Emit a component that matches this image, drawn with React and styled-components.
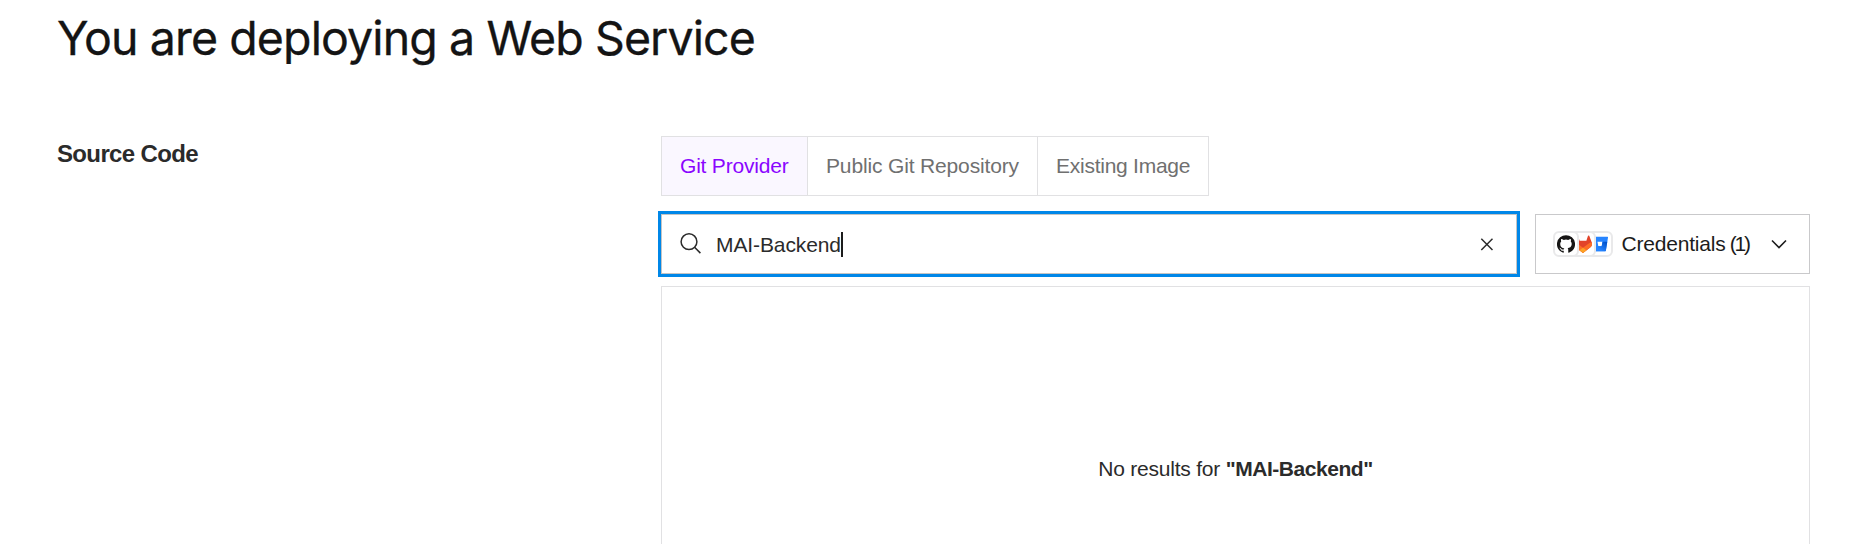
import React from "react";
import styled, { createGlobalStyle } from "styled-components";

const GlobalStyle = createGlobalStyle`
  *, *::before, *::after { box-sizing: border-box; }
  body {
    margin: 0;
    background: #fff;
    color: #2b2b2b;
    font-family: "Liberation Sans", sans-serif;
    font-size: 21px;
    overflow: hidden;
  }
  h1, h2, p { margin: 0; }
  button, input { font: inherit; color: inherit; }
`;

const Page = styled.main`
  height: 544px;
  padding: 10px 54px 0 57px;
  display: flex;
  flex-direction: column;
  overflow: hidden;
`;

const Title = styled.h1`
  height: 60px;
  line-height: 57px;
  font-family: Inter, sans-serif;
  font-size: 46.5px;
  font-weight: 400;
  letter-spacing: -0.9px;
  -webkit-text-stroke: 0.3px #141414;
  color: #141414;
  white-space: nowrap;
`;

const Section = styled.section`
  display: grid;
  grid-template-columns: 604px 1fr;
  margin-top: 66px;
  flex: 1;
`;

const SectionTitle = styled.h2`
  padding-top: 4px;
  line-height: 28px;
  font-size: 24px;
  font-weight: 700;
  letter-spacing: -0.65px;
`;

const Content = styled.div`
  display: flex;
  flex-direction: column;
  min-width: 0;
`;

const Tabs = styled.div`
  display: flex;
  width: 548px;
  height: 60px;
  border: 1px solid #e1e1e3;
`;

const Tab = styled.button`
  width: ${(p) => p.$width}px;
  padding: 0 0 0 18px;
  text-align: left;
  white-space: nowrap;
  border: 0;
  letter-spacing: ${(p) => p.$tracking}px;
  background: ${(p) => (p.$active ? "#faf7ff" : "#fff")};
  color: ${(p) => (p.$active ? "#8a05ff" : "#707070")};
  & + & { border-left: 1px solid #e1e1e3; }
`;

const Controls = styled.div`
  display: flex;
  gap: 18px;
  margin: 18px 0 12px;
`;

const SearchField = styled.div`
  flex: 1;
  height: 60px;
  display: flex;
  align-items: center;
  padding: 0 23px 0 18px;
  border: 1px solid #c4c4c4;
  box-shadow: 0 0 0 3px #0087e8;
`;

const Query = styled.span`
  margin-left: 14px;
  padding-top: 1px;
  flex: 1;
  display: flex;
  align-items: center;
  white-space: nowrap;
  letter-spacing: -0.1px;
`;

const Caret = styled.span`
  width: 2px;
  height: 25px;
  background: #1c1c1c;
`;

const CredentialsButton = styled.button`
  width: 275px;
  height: 60px;
  display: flex;
  align-items: center;
  padding: 0 22px 0 17px;
  border: 1px solid #c9c9cb;
  background: #fff;
  color: #1c1c1c;
`;

const Providers = styled.span`
  display: flex;
  isolation: isolate;
`;

const Provider = styled.span`
  width: 26px;
  height: 26px;
  display: grid;
  place-items: center;
  border: 2px solid #e9e9ea;
  border-radius: 6px;
  background: #fff;
  z-index: ${(p) => p.$level};
  & + & { margin-left: -9px; }
`;

const CredentialsLabel = styled.span`
  margin-left: 8.5px;
  flex: 1;
  text-align: left;
  white-space: nowrap;
  letter-spacing: -0.2px;
`;

const Count = styled.span`
  margin-left: 0.5px;
  letter-spacing: -2.2px;
`;

const Results = styled.div`
  flex: 1;
  border: 1px solid #e1e1e3;
  border-bottom: 0;
  padding-top: 169px;
  text-align: center;
  line-height: 26px;
`;

const EmptyText = styled.p`
  letter-spacing: -0.22px;
  b { letter-spacing: -0.45px; }
`;

const SearchIcon = () => (
  <svg width="22" height="22" viewBox="0 0 22 22" fill="none" stroke="#2b2b2b" strokeWidth="1.5">
    <circle cx="9" cy="8.7" r="7.9" />
    <path d="m14.6 14.3 5.8 5.8" />
  </svg>
);

const CloseIcon = () => (
  <svg width="13" height="13" viewBox="0 0 13 13" fill="none" stroke="#2b2b2b" strokeWidth="1.5">
    <path d="M1.3.8 12.5 12M12.5.8 1.3 12" />
  </svg>
);

const ChevronIcon = () => (
  <svg width="16" height="10" viewBox="0 0 16 10" fill="none" stroke="#1c1c1c" strokeWidth="1.6">
    <path d="m1 1.5 7 7 7-7" />
  </svg>
);

const GithubIcon = () => (
  <svg width="18" height="18" viewBox="0 0 24 24" fill="#161514">
    <path d="M12 .3a12 12 0 0 0-3.8 23.4c.6.1.8-.3.8-.6v-2.2c-3.3.7-4-1.4-4-1.4-.6-1.4-1.4-1.8-1.4-1.8-1-.7.1-.7.1-.7 1.2 0 1.9 1.2 1.9 1.2 1 1.8 2.8 1.3 3.5 1 0-.8.4-1.3.7-1.6-2.7-.3-5.5-1.3-5.5-6 0-1.2.5-2.3 1.3-3.1-.2-.4-.6-1.6 0-3.2 0 0 1-.3 3.4 1.2a11.5 11.5 0 0 1 6 0c2.3-1.5 3.3-1.2 3.3-1.2.6 1.6.2 2.8 0 3.2.9.8 1.3 1.9 1.3 3.2 0 4.6-2.8 5.6-5.5 5.9.5.4.9 1 .9 2.2v3.3c0 .3.1.7.8.6A12 12 0 0 0 12 .3" />
  </svg>
);

const GitlabIcon = () => (
  <svg width="18" height="18" viewBox="0 0 24 24">
    <path fill="#e24329" d="m23.6 9.6-.03-.1L20.3 1a.86.86 0 0 0-1.6.1l-2.2 6.7h-9L5.3 1.1A.86.86 0 0 0 3.7 1L.4 9.5l-.03.1a6 6 0 0 0 2 7L12 24l9.6-7.4a6 6 0 0 0 2-7Z" />
    <path fill="#fc6d26" d="m23.6 9.6-.03-.1a11 11 0 0 0-4.4 2L12 16.9 4.8 11.5a11 11 0 0 0-4.4-2l-.03.1a6 6 0 0 0 2 7L12 24l9.6-7.4a6 6 0 0 0 2-7Z" />
    <path fill="#fca326" d="m7.4 20.4 3.9 3a1.2 1.2 0 0 0 1.4 0l3.9-3-4.6-3.5Z" />
  </svg>
);

const BitbucketIcon = () => (
  <svg width="16" height="16" viewBox="0 0 24 24">
    <defs>
      <linearGradient id="bitbucket-blue" x1="1" y1="0.2" x2="0.4" y2="0.8">
        <stop offset="0" stopColor="#0052cc" />
        <stop offset="1" stopColor="#2684ff" />
      </linearGradient>
    </defs>
    <path fill="#2684ff" d="M.8 1.2a.77.77 0 0 0-.77.9l3.26 19.8c.1.5.5.9 1 .9H20a.77.77 0 0 0 .77-.65L24 2.1a.77.77 0 0 0-.77-.9ZM14.5 15.5h-5L8.2 8.5h7.6Z" />
    <path fill="url(#bitbucket-blue)" d="M22.9 8.5h-7.1l-1.3 7h-5l-5.9 7c.2.2.5.3.7.3H20a.77.77 0 0 0 .77-.65Z" />
  </svg>
);

export default function App() {
  return (
    <>
      <GlobalStyle />
      <Page>
        <Title>You are deploying a Web Service</Title>
        <Section>
          <SectionTitle>Source Code</SectionTitle>
          <Content>
            <Tabs>
              <Tab $active $width={145} $tracking={-0.2}>Git Provider</Tab>
              <Tab $width={230} $tracking={-0.15}>Public Git Repository</Tab>
              <Tab $width={171} $tracking={-0.25}>Existing Image</Tab>
            </Tabs>
            <Controls>
              <SearchField>
                <SearchIcon />
                <Query>MAI-Backend<Caret /></Query>
                <CloseIcon />
              </SearchField>
              <CredentialsButton>
                <Providers>
                  <Provider $level={3}><GithubIcon /></Provider>
                  <Provider $level={2}><GitlabIcon /></Provider>
                  <Provider $level={1}><BitbucketIcon /></Provider>
                </Providers>
                <CredentialsLabel>Credentials<Count> (1)</Count></CredentialsLabel>
                <ChevronIcon />
              </CredentialsButton>
            </Controls>
            <Results>
              <EmptyText>No results for <b>"MAI-Backend"</b></EmptyText>
            </Results>
          </Content>
        </Section>
      </Page>
    </>
  );
}
